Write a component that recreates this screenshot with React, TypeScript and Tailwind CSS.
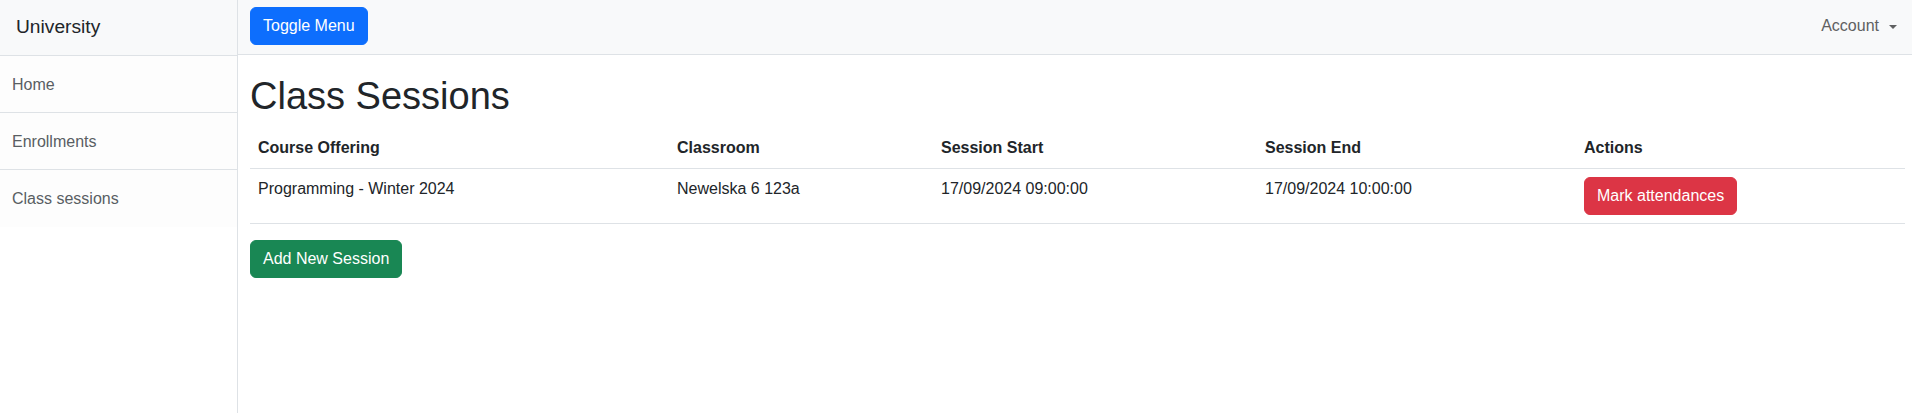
import React from 'react';

const sessions = [
  {
    id: 1,
    offering: 'Programming - Winter 2024',
    classroom: 'Newelska 6 123a',
    start: '17/09/2024 09:00:00',
    end: '17/09/2024 10:00:00',
  },
];

const navItems = ['Home', 'Enrollments', 'Class sessions'];

const App = () => {
  return (
    <div className="flex min-h-[413px] bg-white text-[#212529] font-['Liberation_Sans',Arial,sans-serif]">
      {/* Sidebar */}
      <div className="w-[238px] shrink-0 border-r border-[#dee2e6]">
        <div className="h-[56px] flex items-center pl-4 text-[19.2px] bg-[#f8f9fa] border-b border-[#dee2e6]">
          University
        </div>
        <div className="flex flex-col">
          {navItems.map((item, i) => (
            <a
              key={item}
              href="#"
              className={`h-[57px] flex items-center pl-3 pt-[1px] text-base text-[#595e63] bg-[#fdfdfd] ${
                i < navItems.length - 1 ? 'border-b border-[#dee2e6]' : ''
              }`}
            >
              {item}
            </a>
          ))}
        </div>
      </div>

      {/* Main */}
      <div className="flex-1 min-w-0">
        <nav className="h-[55px] bg-[#f8f9fa] border-b border-[#dee2e6] flex items-start justify-between pl-3 pr-[15px] pt-[7px]">
          <button className="bg-[#0d6efd] text-white text-base leading-6 px-3 py-1.5 border border-[#0d6efd] rounded-md">
            Toggle Menu
          </button>
          <button className="flex items-center mt-[1px] h-[36px] text-base text-[#5f6061]">
            Account
            <span className="ml-[10px] mt-[1px] w-0 h-0 border-l-[4px] border-r-[4px] border-t-[4px] border-l-transparent border-r-transparent border-t-[#5f6061]" />
          </button>
        </nav>

        <div className="pl-3 pr-[7px]">
          <h1 className="mt-[17px] mb-2 text-[38px] leading-[48px] font-medium">Class Sessions</h1>

          <table className="w-full table-fixed border-collapse text-base leading-6 mb-4">
            <thead>
              <tr className="border-b border-[#dee2e6] text-left">
                <th className="w-[419px] p-2 font-bold">Course Offering</th>
                <th className="w-[264px] p-2 font-bold">Classroom</th>
                <th className="w-[324px] p-2 font-bold">Session Start</th>
                <th className="w-[319px] p-2 font-bold">Session End</th>
                <th className="p-2 font-bold">Actions</th>
              </tr>
            </thead>
            <tbody>
              {sessions.map((s) => (
                <tr key={s.id} className="border-b border-[#dee2e6] align-top">
                  <td className="p-2">{s.offering}</td>
                  <td className="p-2">{s.classroom}</td>
                  <td className="p-2">{s.start}</td>
                  <td className="p-2">{s.end}</td>
                  <td className="p-2">
                    <button className="block bg-[#dc3545] text-white leading-6 px-3 py-1.5 border border-[#dc3545] rounded-md">
                      Mark attendances
                    </button>
                  </td>
                </tr>
              ))}
            </tbody>
          </table>

          <button className="block bg-[#198754] text-white text-base leading-6 px-3 py-1.5 border border-[#198754] rounded-md">
            Add New Session
          </button>
        </div>
      </div>
    </div>
  );
};

export default App;
